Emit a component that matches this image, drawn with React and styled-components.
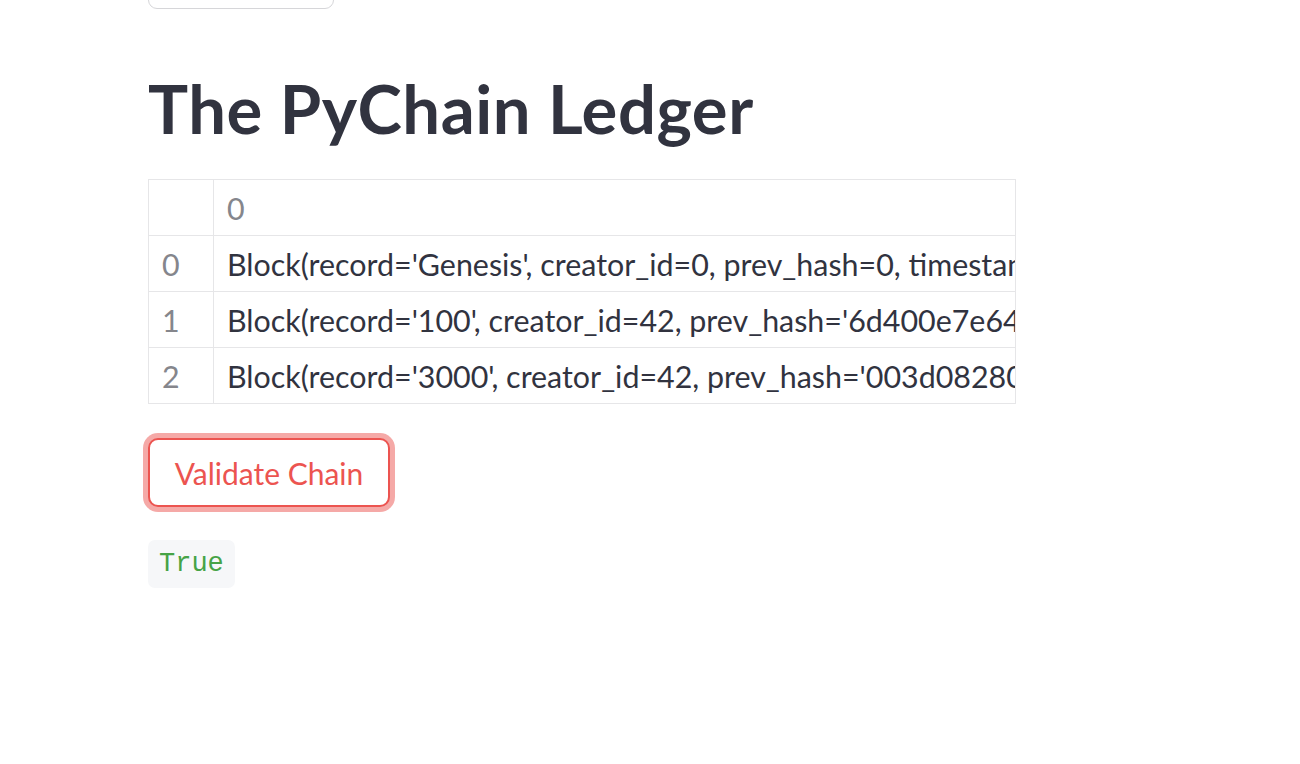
import React from "react";
import styled, { createGlobalStyle } from "styled-components";

const Global = createGlobalStyle`
  html, body { margin: 0; padding: 0; background: #ffffff; }
  body { font-family: Lato, "Noto Sans", sans-serif; color: #31333f; overflow: hidden; }
`;

const Main = styled.div`
  width: 868px;
  padding: 0 0 0 148px;
  display: flex;
  flex-direction: column;
  align-items: flex-start;
`;

const GhostButton = styled.div`
  width: 186px;
  height: 60px;
  margin-top: -51px;
  border: 1.5px solid #d6d6d9;
  border-radius: 9px;
  box-sizing: border-box;
`;

const Title = styled.h1`
  margin: 54px 0 0 0;
  font-size: 67px;
  font-weight: 700;
  line-height: 90px;
  letter-spacing: 0.55px;
  color: #31333f;
`;

const Table = styled.table`
  margin-top: 26px;
  width: 868px;
  border-collapse: collapse;
  table-layout: fixed;
  border: 1.5px solid #e6e6e8;
`;

const Cell = styled.td`
  height: 56px;
  box-sizing: border-box;
  border: 1.5px solid #e6e6e8;
  padding: 0 13px;
  font-size: 30.4px;
  white-space: nowrap;
  overflow: hidden;
  color: ${(p) => (p.$muted ? "#85868c" : "#31333f")};
  width: ${(p) => (p.$index ? "65px" : "auto")};
`;

const ValidateButton = styled.button`
  margin-top: 34px;
  width: 242px;
  height: 69px;
  box-sizing: border-box;
  background: #ffffff;
  border: 2px solid #ec5450;
  border-radius: 10px;
  box-shadow: 0 0 0 5px rgba(242, 140, 137, 0.75);
  color: #ec5450;
  font-family: Lato, "Noto Sans", sans-serif;
  font-size: 30px;
  padding: 0;
  cursor: pointer;
`;

const Code = styled.code`
  margin-top: 33px;
  display: inline-block;
  padding: 4px 11px;
  height: 48px;
  box-sizing: border-box;
  background: #f6f7f9;
  border-radius: 7px;
  color: #46a346;
  font-family: "Liberation Mono", "DejaVu Sans Mono", monospace;
  font-size: 27px;
  line-height: 40px;
`;

const rows = [
  "Block(record='Genesis', creator_id=0, prev_hash=0, timestamp='2021-11-08 19:52:01', nonce=0)",
  "Block(record='100', creator_id=42, prev_hash='6d400e7e648e5f1c0d2b3a9e', nonce=1)",
  "Block(record='3000', creator_id=42, prev_hash='003d0828021a8b7c', nonce=2)",
];

export default function App() {
  return (
    <>
      <Global />
      <Main>
        <GhostButton />
        <Title>The PyChain Ledger</Title>
        <Table>
          <tbody>
            <tr>
              <Cell $index />
              <Cell $muted>0</Cell>
            </tr>
            {rows.map((r, i) => (
              <tr key={i}>
                <Cell $index $muted>{i}</Cell>
                <Cell>{r}</Cell>
              </tr>
            ))}
          </tbody>
        </Table>
        <ValidateButton>Validate Chain</ValidateButton>
        <Code>True</Code>
      </Main>
    </>
  );
}
